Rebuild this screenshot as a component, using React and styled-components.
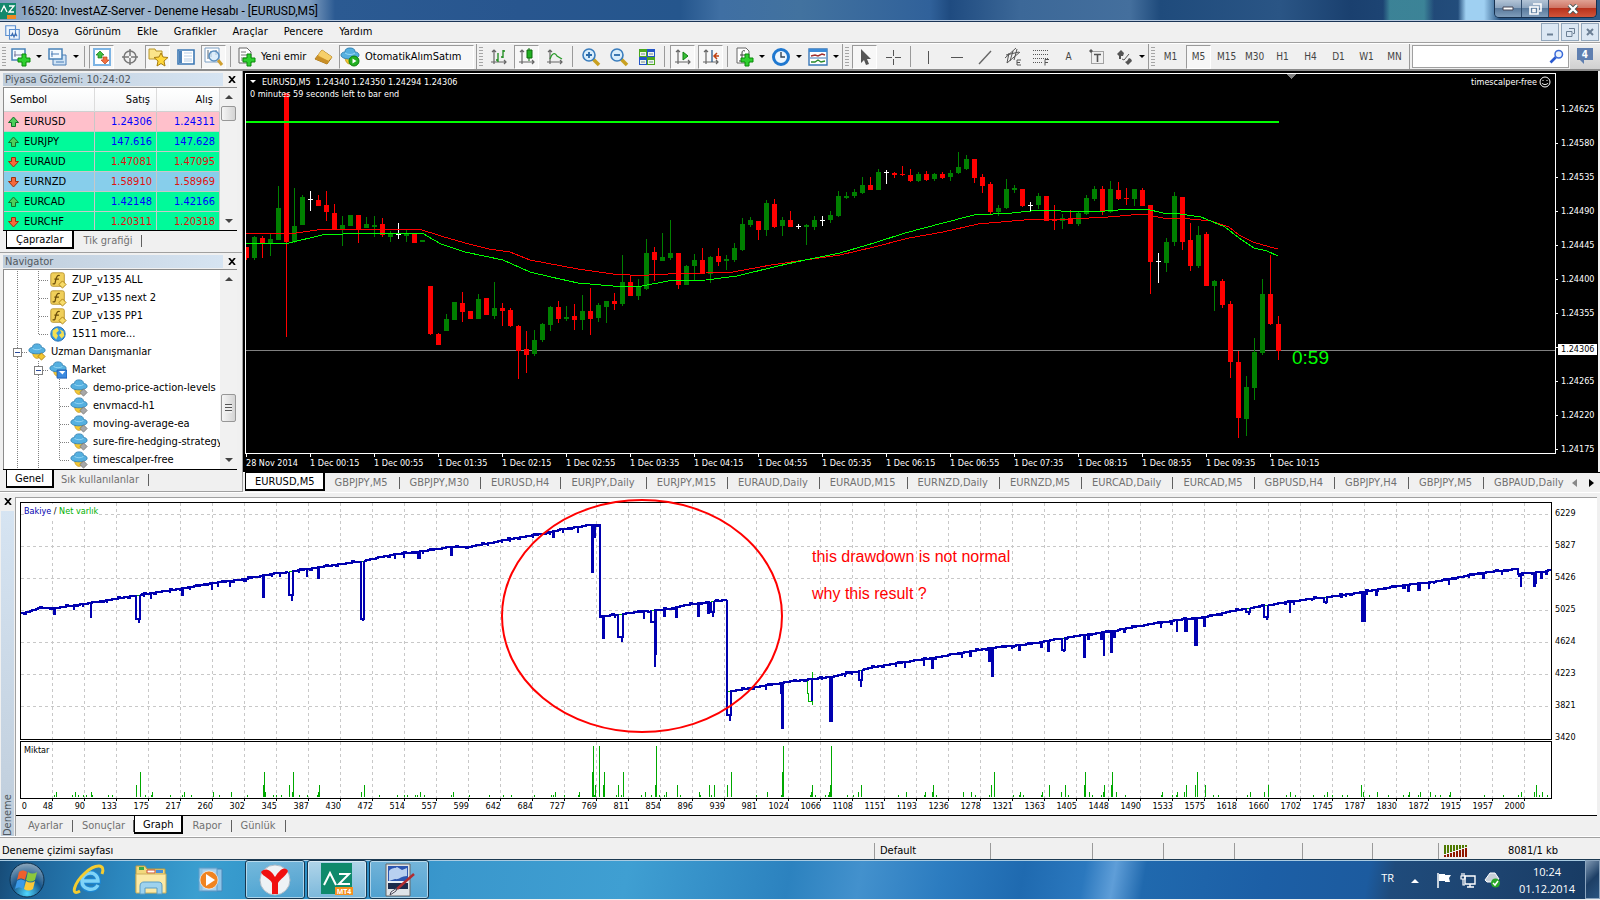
import React from 'react';
import styled, { createGlobalStyle, css } from 'styled-components';

const ui = '"DejaVu Sans Condensed", "DejaVu Sans", sans-serif';
const segoe = '"Open Sans", "Noto Sans", sans-serif';
const arial = '"Liberation Sans", Arial, sans-serif';

const GlobalStyle = createGlobalStyle`
  *, *::before, *::after { box-sizing: border-box; }
  body { margin: 0; background: #f0f0f0; font: 11px/14px ${ui}; color: #000; overflow: hidden; }
  button { font: inherit; color: inherit; background: none; border: 0; padding: 0; }
  svg { display: block; flex: none; }
`;

const Page = styled.div`
  display: flex;
  flex-direction: column;
  min-height: 100vh;
`;

/* window frame */

const TitleBar = styled.header`
  display: flex;
  align-items: flex-start;
  height: 22px;
  border-bottom: 1px solid #1c3556;
  box-shadow: inset 0 -1px 0 #b9cbe0;
  background:
    linear-gradient(90deg, transparent 1383px, #43929fcc 1390px, #43929fcc 1424px, transparent 1434px),
    linear-gradient(90deg, transparent 1458px, #9fd0f2 1466px, #9fd0f2 1484px, transparent 1500px),
    linear-gradient(90deg, #7e9cbd 0, #a3b8cd 60px, #93adc8 240px, #7d9cbf 310px, #2b5a92 335px, #28568f 520px,
      #25568d 680px, #3f6fa3 720px, #42729f 800px, #30619a 930px, #1f4b80 950px, #3c6898 1020px, #446f9d 1130px,
      #1f4b7c 1160px, #2a5585 1280px, #1a406f 1350px, #2e5d8b 100%);
`;

const AppLogo = styled.svg`
  margin: 3px 5px 0 0;
`;

const Title = styled.h1`
  flex: 1;
  margin: 0;
  font: 12px/22px Roboto, ${segoe};
  white-space: nowrap;
`;

const CaptionButtons = styled.div`
  display: flex;
  height: 18px;
  margin-right: 3px;
  border: 1px solid #16304e;
  border-top: 0;
  border-radius: 0 0 5px 5px;
  overflow: hidden;
`;

const CaptionButton = styled.button`
  display: flex;
  align-items: center;
  justify-content: center;
  width: ${(p) => (p.$close ? 47 : 27)}px;
  border-right: ${(p) => (p.$close ? 0 : '1px solid #2f4b6b')};
  background: ${(p) =>
    p.$close
      ? 'linear-gradient(#e0a294 0, #cf7665 45%, #b8321c 50%, #d0553a 100%)'
      : 'linear-gradient(#b3c4d6 0, #8ca4be 45%, #5a7a9c 50%, #7f9dbb 100%)'};
`;

const MenuBar = styled.nav`
  display: flex;
  align-items: center;
  height: 21px;
  padding-left: 5px;
  border-bottom: 1px solid #a0a0a0;
`;

const MenuItem = styled.button`
  height: 20px;
  padding: 0 8px;
`;

const MdiButtons = styled.div`
  display: flex;
  gap: 2px;
  margin-left: auto;
  padding-right: 1px;
`;

const MdiButton = styled.button`
  display: flex;
  align-items: center;
  justify-content: center;
  width: 18px;
  height: 18px;
  border: 1px solid #93a7bb;
  background: #dbe7f3;
`;

/* toolbar */

const Toolbar = styled.div`
  display: flex;
  height: 28px;
  border-top: 1px solid #fff;
  border-bottom: 2px solid #8c8c8c;
`;

const ToolGroup = styled.div`
  display: flex;
  align-items: center;
  gap: 3px;
  padding: 0 2px;
  border-right: 1px solid #9a9a9a;
`;

const Grip = styled.span`
  width: 4px;
  height: 20px;
  background: repeating-linear-gradient(#a5a5a5 0 1px, #f0f0f0 1px 3px);
`;

const Separator = styled.span`
  width: 1px;
  height: 21px;
  margin: 0 ${(p) => (p.$wide ? 2 : 1)}px;
  background: #9a9a9a;
`;

const ToolButton = styled.button`
  display: flex;
  align-items: center;
  justify-content: ${(p) => (p.$start ? 'flex-start' : 'center')};
  gap: 5px;
  width: ${(p) => p.$w || 25}px;
  height: 24px;
  font-size: ${(p) => (p.$small ? 10 : 11)}px;
  color: ${(p) => (p.$small ? '#444' : '#000')};
  white-space: nowrap;
  border: 1px solid transparent;
  ${(p) =>
    p.$on &&
    css`
      border-color: #9a9a9a #fff #fff #9a9a9a;
      background: #f7f7f7;
    `}
`;

const Caret = styled.span`
  border: 3px solid transparent;
  border-top-color: ${(p) => (p.$light ? '#fff' : '#000')};
  border-bottom: 0;
`;

const SearchBox = styled.label`
  display: flex;
  flex: 1;
  align-items: center;
  margin: 1px 1px 1px 2px;
  padding-right: 4px;
  border: 1px solid #a0a0a0;
  background: #fff;

  input {
    flex: 1;
    min-width: 0;
    border: 0;
    outline: 0;
    font: inherit;
    background: transparent;
  }
`;

const ChatButton = styled.button`
  display: flex;
  align-items: center;
  justify-content: center;
  width: 30px;
  background: linear-gradient(#eee, #d0d0d0);
`;

/* left side */

const Workspace = styled.div`
  display: flex;
  height: 421px;
`;

const Sidebar = styled.aside`
  display: flex;
  flex-direction: column;
  width: 243px;
  flex: none;
`;

const Panel = styled.section`
  display: flex;
  flex-direction: column;
  height: ${(p) => p.$h}px;
  padding: 1px 5px 0 3px;
  border-right: 1px solid #a0a0a0;
  border-bottom: 1px solid #a0a0a0;
`;

const PanelTitle = styled.div`
  display: flex;
  align-items: center;
  height: 14px;
  margin-bottom: 1px;

  h2 {
    flex: 1;
    margin: 0 4px 0 0;
    padding-left: 2px;
    font: 11px/13px ${ui};
    color: #505860;
    background: linear-gradient(90deg, #bfcddb, #d6e4f2);
  }
`;

const Close = styled.button`
  display: flex;
  width: 10px;
  justify-content: center;
`;

const PanelBody = styled.div`
  display: flex;
  flex: 1;
  min-height: 0;
  border-top: 1px solid #8c8c8c;
  border-left: 1px solid #8c8c8c;
  background: #fff;
  overflow: hidden;
`;

const ScrollBar = styled.div`
  display: flex;
  flex-direction: column;
  align-items: center;
  justify-content: space-between;
  width: 17px;
  flex: none;
  padding: 7px 0;
  background: #f1f1f1;
`;

const ScrollArrow = styled.span`
  border: 4px solid transparent;
  ${(p) => (p.$up ? 'border-bottom-color: #444; border-top: 0;' : 'border-top-color: #444; border-bottom: 0;')}
`;

const Thumb = styled.span`
  display: flex;
  align-items: center;
  justify-content: center;
  width: 15px;
  height: ${(p) => p.$h}px;
  margin: ${(p) => p.$m};
  border: 1px solid #979797;
  border-radius: 2px;
  background: linear-gradient(90deg, #f5f5f5, #d4d4d4);

  &::after {
    content: '';
    width: 7px;
    height: ${(p) => (p.$ribs ? 9 : 0)}px;
    background: repeating-linear-gradient(#555 0 1px, #eee 1px 3px);
  }
`;

const Quotes = styled.table`
  flex: 1;
  align-self: flex-start;
  border-collapse: separate;
  border-spacing: 0;
  table-layout: fixed;

  th {
    height: 24px;
    padding: 0 6px;
    font-weight: normal;
    text-align: right;
    background: linear-gradient(#fff, #f4f5f6);
    border-right: 1px solid #dcdcdc;
    border-bottom: 1px solid #d0d0d0;
  }
  th:first-child { width: 91px; text-align: left; }
  th:nth-child(2) { width: 62px; }
  td {
    height: 20px;
    padding: 0 4px 0 0;
    text-align: right;
    border-right: 1px solid #c8c8c8;
    border-bottom: 1px solid #c8c8c8;
  }
`;

const QuoteRow = styled.tr`
  background: ${(p) => p.$bg};
  color: ${(p) => (p.$up ? '#0000ff' : '#e01010')};
`;

const SymbolCell = styled.div`
  display: flex;
  align-items: center;
  gap: 5px;
  padding-left: 4px;
  color: #000;
`;

const Tabs = styled.div`
  display: flex;
  flex: ${(p) => (p.$grow ? '1' : 'none')};
  min-width: 0;
  height: ${(p) => p.$h}px;
  padding-left: ${(p) => p.$pl || 0}px;
  border-top: 1px solid #000;
  overflow: hidden;
`;

const Tab = styled.button`
  display: flex;
  align-items: center;
  height: 18px;
  padding: 1px ${(p) => p.$pr ?? 9}px 0 ${(p) => p.$pl ?? 9}px;
  color: #707070;
  white-space: nowrap;

  &::after {
    content: '';
    width: 1px;
    height: 12px;
    margin-left: ${(p) => p.$pr ?? 9}px;
    margin-right: -${(p) => p.$pr ?? 9}px;
    background: #606060;
  }
  ${(p) =>
    p.$active &&
    css`
      color: #000;
      background: #fff;
      border: solid #000;
      border-width: 0 2px 2px 1px;
      &::after { display: none; }
    `}
`;

const Tree = styled.ul`
  flex: 1;
  min-width: 0;
  margin: 0;
  padding: 1px 0 0 3px;
  list-style: none;
  overflow: hidden;
`;

const TreeItem = styled.li`
  display: flex;
  align-items: center;
  height: 18px;
  white-space: nowrap;

  span { padding-left: 5px; }
`;

/* price chart */

const ChartColumn = styled.main`
  display: flex;
  flex-direction: column;
  flex: 1;
  min-width: 0;
`;

const ChartWindow = styled.div`
  display: grid;
  grid-template-columns: minmax(0, 1fr) 42px;
  grid-template-rows: 381px 17px;
  height: 401px;
  padding: 2px 0 0 2px;
  background: #000;
  color: #fff;
  font-size: 9px;
  line-height: 12px;
  border-right: 2px solid #f0f0f0;
`;

const PricePlot = styled.div`
  position: relative;
  border: 1px solid #fff;
  overflow: hidden;
`;

const ChartCaption = styled.div`
  position: absolute;
  top: 1px;
  left: 4px;
  white-space: pre;
`;

const ChartCaptionLine = styled.div`
  display: flex;
  align-items: center;
  gap: 6px;
  height: 13px;
`;

const ExpertName = styled.div`
  position: absolute;
  top: 2px;
  right: 4px;
  display: flex;
  align-items: center;
  gap: 2px;
`;

const PriceAxis = styled.div`
  padding-top: 19px;
`;

const PriceLabel = styled.div`
  display: flex;
  align-items: center;
  height: 34px;
  gap: 3px;
  &::before { content: ''; width: 2px; height: 1px; background: #fff; }
  b {
    margin: 4px 0 0 -3px;
    padding: 0 3px;
    font-weight: normal;
    line-height: 11px;
    background: #fff;
    color: #000;
  }
`;

const TimeAxis = styled.div`
  display: flex;
  padding-left: 1px;
`;

const TimeLabel = styled.div`
  flex: 0 0 64px;
  white-space: nowrap;
  &::before { content: ''; display: block; width: 1px; height: 3px; background: #fff; }
`;

const ChartTabs = styled.div`
  display: flex;
  height: 20px;
  padding-left: 2px;
  box-shadow: inset 0 1px 0 #fff;
`;

const TabScroll = styled.div`
  display: flex;
  align-items: center;
  gap: 12px;
  width: 34px;
  flex: none;
  padding-left: 6px;
  border-top: 1px solid #000;
`;

/* strategy tester */

const Tester = styled.section`
  display: flex;
  height: 345px;
  border-top: 1px solid #fff;
  border-bottom: 1px solid #fff;
`;

const TesterSide = styled.div`
  display: flex;
  flex-direction: column;
  align-items: center;
  width: 15px;
  flex: none;
  padding: 5px 1px 0;
`;

const TesterTitle = styled.div`
  flex: 1;
  width: 13px;
  margin-top: 6px;
  padding-bottom: 3px;
  line-height: 13px;
  color: #505860;
  background: linear-gradient(#bfcddb, #d6e4f2);
  writing-mode: vertical-rl;
  transform: rotate(180deg);
`;

const TesterBody = styled.div`
  display: flex;
  flex-direction: column;
  flex: 1;
  min-width: 0;
  margin: 4px 3px 0 0;
  border-top: 1px solid #a0a0a0;
  border-left: 1px solid #a0a0a0;
`;

const TesterCharts = styled.div`
  display: grid;
  grid-template-columns: minmax(0, 1fr) 45px;
  grid-template-rows: 238px 58px 16px;
  row-gap: 1px;
  height: 317px;
  padding: 4px 0 0 4px;
  background: #fff;
  font-size: 9px;
`;

const Plot = styled.div`
  position: relative;
  border: 1px solid #000;
  svg { overflow: visible; }
`;

const PlotLabel = styled.div`
  position: absolute;
  top: 1px;
  left: 3px;
  background: #fff;
`;

const SeriesName = styled.span`
  color: ${(p) => p.$color};
`;

const Note = styled.p`
  position: absolute;
  left: 791px;
  top: ${(p) => p.$top}px;
  margin: 0;
  font: 16px/20px ${arial};
  color: #ff0000;
`;

const BalanceAxis = styled.div`
  padding-left: 3px;
  line-height: 22px;
  div { height: 32px; }
`;

const TradeAxis = styled.div`
  display: flex;
  padding-left: 1px;
  line-height: 12px;
  overflow: hidden;
`;

const TradeLabel = styled.div`
  flex: 0 0 ${(p) => p.$w}px;
  text-align: right;
`;

/* status bar and taskbar */

const StatusBar = styled.footer`
  display: flex;
  align-items: center;
  height: 22px;
  padding-top: 4px;
  border-top: 1px solid #a0a0a0;
`;

const StatusCell = styled.div`
  display: flex;
  align-items: center;
  height: 16px;
  width: ${(p) => p.$w}px;
  ${(p) => (p.$grow ? 'flex: 1; padding-left: 2px;' : 'flex: none; padding-left: 5px; border-left: 1px solid #9a9a9a;')}
`;

const Traffic = styled.span`
  margin-left: 40px;
`;

const Taskbar = styled.div`
  display: flex;
  height: 40px;
  border-top: 1px solid #1c3a52;
  box-shadow: inset 0 1px 0 #a9cbe2;
  color: #fff;
  font: 11px/17px ${segoe};
  background: linear-gradient(100deg, #174c78 0, #1f679c 40px, #2b86bd 120px, #3b9fd0 200px, #2b8cc4 330px, #3a97cc 440px,
    #3f9fd2 620px, #2c82bf 780px, #4391cd 850px, #2c7cc0 930px, #1f6ab0 1010px, #2b78be 1070px, #5f9ed8 1100px,
    #2069ae 1130px, #1c5fa6 1250px, #1c5b9f 1350px, #1f4b7b 1375px, #1d436f 1480px, #173a62 100%);
`;

const TaskLaunch = styled.button`
  display: flex;
  align-items: center;
  justify-content: center;
  width: ${(p) => p.$w}px;
`;

const TaskButton = styled.button`
  display: flex;
  align-items: center;
  justify-content: center;
  width: 60px;
  margin-left: 2px;
  border: 1px solid #16364f;
  border-radius: 3px;
  box-shadow: inset 0 0 0 1px #ffffff80;
  background: ${(p) => (p.$active ? 'linear-gradient(#ffffffa0, #ffffff60)' : 'linear-gradient(#ffffff50, #ffffff25)')};
`;

const Tray = styled.div`
  display: flex;
  align-items: center;
  gap: 8px;
  margin-left: auto;
`;

const Language = styled.span`
  margin-right: 2px;
  padding-bottom: 4px;
`;

const Clock = styled.div`
  width: 76px;
  margin-right: -8px;
  text-align: center;
`;

const ShowDesktop = styled.button`
  align-self: stretch;
  width: 15px;
  border: 1px solid #8ba5bf;
  background: linear-gradient(135deg, #7f98b3, #1d3f66 50%, #2a5480);
`;

/* icons */

const Svg = ({ s = 20, children, ...rest }) => (
  <svg width={s} height={s} viewBox="0 0 20 20" fill="none" {...rest}>
    {children}
  </svg>
);

const Plus = ({ x = 7, y = 7 }) => (
  <path transform={`translate(${x} ${y})`} d="M4 0h4v4h4v4H8v4H4V8H0V4h4z" fill="#2fd02f" stroke="#0a8a0a" />
);

const Axes = () => (
  <path d="M5 3v14M2 15h15M3 5l2-2 2 2M15 13l2 2-2 2" stroke="#666" strokeWidth="1.2" />
);

const Hat = () => (
  <>
    <path d="M5 9h10c0 5-2 8-5 8s-5-3-5-8z" fill="#f4c832" stroke="#c99a20" />
    <path d="M1 8c0-2 2-3 4-3 0-3 2-4 5-4s5 1 5 4c2 0 4 1 4 3 0 3-5 4-9 4S1 11 1 8z" fill="#55b0e0" stroke="#3585b5" />
    <path d="M5 6c2 2 8 2 10 0" stroke="#9ad8f5" />
  </>
);

const icons = {
  newChart: (
    <Svg>
      <path d="M1 2h13v11H1z" fill="#f4faff" stroke="#4a82b8" strokeWidth="1.500" />
      <path d="M4 4v6M3 8h8" stroke="#779" />
      <Plus />
    </Svg>
  ),
  profiles: (
    <Svg>
      <path d="M5 8h13v10H5z" fill="#cfe3f5" stroke="#4a7db5" />
      <path d="M1 2h13v10H1z" fill="#f4faff" stroke="#4a82b8" strokeWidth="1.500" />
      <path d="M4 4v6M3 7h8M8 15h8" stroke="#4a7db5" />
    </Svg>
  ),
  market: (
    <Svg>
      <path d="M2 2h16v16H2z" fill="#fff" stroke="#7db4e4" strokeWidth="2" />
      <path d="M8 4l4 4H10v3H6V8H4z" fill="#3fc03f" stroke="#177a17" strokeWidth=".7" />
      <path d="M13 17l-4-4h2v-3h4v3h2z" fill="#f07040" stroke="#c04418" strokeWidth=".7" />
    </Svg>
  ),
  crosshair: (
    <Svg stroke="#777" strokeWidth="1.500">
      <circle cx="10" cy="10" r="6" />
      <path d="M10 2v7M10 11v7M2 10h7M11 10h7" />
    </Svg>
  ),
  navigator: (
    <Svg>
      <path d="M1 2h6l1 2h6v8H1z" fill="#fbe58a" stroke="#b8962a" />
      <path d="M13 6l2 4 5 .5-4 3.500 1 5-4-2.500-4 2.500 1-5-4-3.500 5-.5z" fill="#ffd83c" stroke="#a87d10" />
    </Svg>
  ),
  terminal: (
    <Svg>
      <path d="M2 3h16v14H2z" fill="#fff" stroke="#3c78b4" strokeWidth="1.600" />
      <path d="M3 4h3v12H3z" fill="#4a80b8" />
      <path d="M8 6h8M8 9h8M8 12h8M8 14h8" stroke="#b9cfe6" />
    </Svg>
  ),
  tester: (
    <Svg>
      <path d="M1 1h14v14H1z" fill="#fff" stroke="#7da0c4" />
      <path d="M4 3v9M7 4v6M12 3v5" stroke="#567" />
      <path d="M14 13l4 5" stroke="#d0a030" strokeWidth="3" />
      <circle cx="10" cy="9" r="5" fill="#cfe6f8bb" stroke="#5b8fc0" strokeWidth="1.500" />
    </Svg>
  ),
  order: (
    <Svg>
      <path d="M3 1h8l4 4v11H3z" fill="#fff" stroke="#666" />
      <path d="M5 5h5M5 8h8M5 11h6M5 13h5" stroke="#777" />
      <Plus />
    </Svg>
  ),
  gold: (
    <Svg>
      <path d="M8 3l10 7-5 7-12-5z" fill="#e8b23a" stroke="#a8761a" />
      <path d="M8 3l10 7-4 4L4 8z" fill="#f6cf6a" />
      <path d="M1 12l12 5 2-3-11-5z" fill="#c98f28" />
    </Svg>
  ),
  auto: (
    <Svg>
      <Hat />
      <circle cx="14" cy="14" r="5" fill="#22b022" stroke="#0c800c" />
      <path d="M12.500 11.500v5l4-2.500z" fill="#fff" />
    </Svg>
  ),
  bars: (
    <Svg>
      <Axes />
      <path d="M9 6v9M7 13h2M14 3v8M14 4h2M12 10h2" stroke="#1a8a1a" strokeWidth="1.300" />
    </Svg>
  ),
  candles: (
    <Svg>
      <Axes />
      <path d="M12 1v13" stroke="#0a6a0a" />
      <path d="M10 3h5v8h-5z" fill="#22b022" stroke="#0a6a0a" />
    </Svg>
  ),
  line: (
    <Svg>
      <Axes />
      <path d="M5 12c2-6 5-7 7-3l5 3" stroke="#2a9a2a" strokeWidth="1.300" />
    </Svg>
  ),
  zoomIn: (
    <Svg>
      <path d="M12 12l6 6" stroke="#c9a020" strokeWidth="3.500" />
      <circle cx="8" cy="8" r="6" fill="#d8edfb" stroke="#3a7dbd" strokeWidth="1.600" />
      <path d="M5 8h6M8 5v6" stroke="#2a6aaa" strokeWidth="1.800" />
    </Svg>
  ),
  zoomOut: (
    <Svg>
      <path d="M12 12l6 6" stroke="#c9a020" strokeWidth="3.500" />
      <circle cx="8" cy="8" r="6" fill="#d8edfb" stroke="#3a7dbd" strokeWidth="1.600" />
      <path d="M5 8h6" stroke="#2a6aaa" strokeWidth="1.800" />
    </Svg>
  ),
  tiles: (
    <Svg>
      <path d="M2 2h8v8H2zM10 10h8v8h-8z" fill="#4aa81e" />
      <path d="M10 2h8v8h-8zM2 10h8v8H2z" fill="#2456c8" />
      <path d="M3 5h6v4H3zM11 5h6v4h-6zM3 13h6v4H3zM11 13h6v4h-6z" fill="#eef6ea" />
      <path d="M4 7h4M12 7h4M4 15h4M12 15h4" stroke="#789" />
    </Svg>
  ),
  scroll: (
    <Svg>
      <Axes />
      <path d="M10 5v8l5-4z" fill="#35c035" stroke="#128012" />
    </Svg>
  ),
  shift: (
    <Svg>
      <Axes />
      <path d="M11 3v12" stroke="#2a5a8a" strokeWidth="1.300" />
      <path d="M18 9h-5M16 6l-3 3 3 3" stroke="#c04010" strokeWidth="1.500" />
    </Svg>
  ),
  indicators: (
    <Svg>
      <path d="M3 1h9l3 3v12H3z" fill="#fff" stroke="#666" />
      <path d="M11 4c-2-1-3 0-3 2v6c0 2-1 2-3 2M6 8h5" stroke="#444" />
      <Plus />
    </Svg>
  ),
  clock: (
    <Svg>
      <circle cx="10" cy="10" r="7.500" fill="#eef6fd" stroke="#1f78d0" strokeWidth="3" />
      <path d="M10 5v5h4" stroke="#345" strokeWidth="1.400" />
    </Svg>
  ),
  template: (
    <Svg>
      <path d="M1 2h18v16H1z" fill="#fff" stroke="#3a78b8" strokeWidth="1.400" />
      <path d="M1 2h18v3H1z" fill="#3a8ad8" />
      <path d="M3 9l4-1 3 1 4-2 3 1" stroke="#a03030" strokeWidth="1.400" />
      <path d="M2 11h16" stroke="#3a78b8" />
      <path d="M3 15l4 0 3-2 3 2 4-1" stroke="#2a8a2a" strokeWidth="1.400" />
    </Svg>
  ),
  cursor: (
    <Svg>
      <path d="M6 2v14l3-3 2 5 3-1-2-5h4z" fill="#555" />
    </Svg>
  ),
  cross: (
    <Svg stroke="#555">
      <path d="M10.500 3v6M10.500 12v6M3 10.500h6M12 10.500h6" />
    </Svg>
  ),
  vline: <Svg stroke="#555"><path d="M9.500 4v13" /></Svg>,
  hline: <Svg stroke="#555"><path d="M4 10.500h12" /></Svg>,
  trend: <Svg stroke="#666"><path d="M4 17L16 4" strokeWidth="1.400" /></Svg>,
  channel: (
    <Svg stroke="#555">
      <path d="M2 11L13 1M4 16L17 5M6 6l-2 10M10 4L7 14M14 2l-3 11M3 8l13-3" />
      <path d="M18 13h-4v5h4M14 15.500h3" />
    </Svg>
  ),
  fibo: (
    <Svg stroke="#555">
      <path d="M2 3.500h15M2 7.500h15M2 11.500h15M2 15.500h10" strokeDasharray="1 1" />
      <path d="M18 12.500h-4v6M14 15.500h3" />
    </Svg>
  ),
  label: (
    <Svg stroke="#555">
      <path d="M4.500 4.500h12v12h-12z" strokeDasharray="1 1" />
      <path d="M7 7.500h7M10.500 7v8" strokeWidth="1.600" />
      <path d="M3 3h2v2H3z" fill="#555" />
    </Svg>
  ),
  arrows: (
    <Svg>
      <path d="M3 7l4-4 3 3-1 3H7v3H5V9zM18 14l-4 4-3-3 2-1 2-3 2 1z" fill="#555" />
      <path d="M8 12l2 1 5-6" stroke="#555" />
    </Svg>
  ),
};

const CloseGlyph = () => (
  <svg width="8" height="7" viewBox="0 0 8 7"><path d="M1 0l6 7M7 0L1 7" stroke="#000" strokeWidth="1.700" /></svg>
);

const SymbolArrow = ({ up }) => (
  <svg width="11" height="12" viewBox="0 0 11 12">
    {up ? (
      <path d="M5.500 1l5 5.500H7.500v4h-4v-4h-3z" fill="#4ccf5a" stroke="#14702a" />
    ) : (
      <path d="M5.500 11l5-5.500H7.500v-4h-4v4h-3z" fill="#f4683c" stroke="#a03010" />
    )}
  </svg>
);

const treeIcons = {
  fn: (
    <Svg s={18}>
      <rect x="2" y="2" width="15" height="15" rx="2" fill="#f0cf5a" stroke="#b8932c" />
      <path d="M12 5c-3-1-3 1-4 3l-1 4c0 2-1 3-3 2M6 9h5" stroke="#6a4c08" strokeWidth="1.400" />
      <path d="M15 11l4 4-4 4-4-4z" fill="#f8dc6a" stroke="#a87d10" />
    </Svg>
  ),
  globe: (
    <Svg s={18}>
      <circle cx="10" cy="10" r="8" fill="#3a9ae0" stroke="#1c6ab0" />
      <path d="M4 6l5-3 2 3-3 3 2 3-2 4-4-4zM12 5l4 2 1 5-3 3-3-4 3-2z" fill="#f4e050" />
    </Svg>
  ),
  experts: <Svg s={18}><Hat /><path d="M15 11l4 4-4 4-4-4z" fill="#f4c832" stroke="#a87d10" /></Svg>,
  market: <Svg s={18}><Hat /><path d="M9 10h11v9H9z" fill="#3c8ae0" stroke="#1c5ab0" /><path d="M11 11h7l-3 4z" fill="#fff" /></Svg>,
  ea: <Svg s={18}><Hat /><path d="M15 11l4 4-4 4-4-4z" fill="#a8a8a8" stroke="#777" /></Svg>,
};

/* v: line through, t: tee, l: corner, m: collapse box */
const Guide = ({ kind }) => (
  <svg width="21" height="18" viewBox="0 0 21 18" stroke="#808080" shapeRendering="crispEdges">
    <path d={kind === 'l' ? 'M10.500 0v10' : 'M10.500 0v18'} strokeDasharray="1 1" />
    {kind !== 'v' && <path d="M11 9.500h10" strokeDasharray="1 1" />}
    {kind === 'm' && <path d="M6.500 5.500h8v8h-8z" fill="#fff" />}
    {kind === 'm' && <path d="M8 9.500h5" stroke="#2a4a9a" />}
  </svg>
);

/* data */

const quotes = [
  ['EURUSD', '1.24306', '1.24311', 1, '#ffc0cb'],
  ['EURJPY', '147.616', '147.628', 1, '#00fa9a'],
  ['EURAUD', '1.47081', '1.47095', 0, '#00fa9a'],
  ['EURNZD', '1.58910', '1.58969', 0, '#87ceeb'],
  ['EURCAD', '1.42148', '1.42166', 1, '#00fa9a'],
  ['EURCHF', '1.20311', '1.20318', 0, '#00fa9a'],
];

const treeRows = [
  ['vt', 'fn', 'ZUP_v135 ALL'],
  ['vt', 'fn', 'ZUP_v135 next 2'],
  ['vt', 'fn', 'ZUP_v135 PP1'],
  ['vl', 'globe', '1511 more...'],
  ['m', 'experts', 'Uzman Danışmanlar'],
  ['vm', 'market', 'Market'],
  ['vvt', 'ea', 'demo-price-action-levels'],
  ['vvt', 'ea', 'envmacd-h1'],
  ['vvt', 'ea', 'moving-average-ea'],
  ['vvt', 'ea', 'sure-fire-hedging-strategy'],
  ['vvl', 'ea', 'timescalper-free'],
];

const chartTabs = [
  'EURUSD,M5', 'GBPJPY,M5', 'GBPJPY,M30', 'EURUSD,H4', 'EURJPY,Daily', 'EURJPY,M15', 'EURAUD,Daily', 'EURAUD,M15',
  'EURNZD,Daily', 'EURNZD,M5', 'EURCAD,Daily', 'EURCAD,M5', 'GBPUSD,H4', 'GBPJPY,H4', 'GBPJPY,M5', 'GBPAUD,Daily',
];

const times = [
  '28 Nov 2014', '1 Dec 00:15', '1 Dec 00:55', '1 Dec 01:35', '1 Dec 02:15', '1 Dec 02:55', '1 Dec 03:35',
  '1 Dec 04:15', '1 Dec 04:55', '1 Dec 05:35', '1 Dec 06:15', '1 Dec 06:55', '1 Dec 07:35', '1 Dec 08:15',
  '1 Dec 08:55', '1 Dec 09:35', '1 Dec 10:15',
];

const prices = [
  '1.24625', '1.24580', '1.24535', '1.24490', '1.24445', '1.24400', '1.24355', '1.24306', '1.24265', '1.24220', '1.24175',
];

// direction, high, body top, body bottom, low
const candles = `r 247 247 258 260|g 236 237 258 260|r 236 238 244 258|g 234 239 244 256|g 186 208 240 240|r 93 93 242 337
g 188 226 242 243|g 195 197 225 225|w 191 199 199 211|r 195 200 206 206|r 191 205 212 221|r 204 213 230 230
g 216 225 230 246|g 215 215 226 226|r 215 215 230 243|g 217 224 228 228|g 216 225 227 237|r 218 224 235 237
g 231 234 237 242|w 223 234 234 239|g 230 234 236 242|r 234 234 243 243|g 240 240 242 242|r 286 286 334 335
r 333 334 345 345|g 314 319 331 331|g 302 302 320 320|r 292 303 312 322|r 311 311 319 319|g 294 299 319 319
r 298 298 315 315|g 282 308 316 319|r 303 308 311 326|r 308 310 326 327|r 325 326 351 379|r 331 349 355 373
g 330 340 354 356|g 323 324 340 342|g 306 307 325 331|r 301 307 319 323|g 306 317 319 321|r 304 316 320 330
g 295 311 320 330|r 288 311 319 335|g 303 305 318 322|g 301 301 307 323|r 293 301 304 310|g 255 282 304 306
r 276 282 296 296|g 279 286 296 300|g 239 253 289 290|r 247 252 260 281|g 233 257 261 261|g 220 253 258 260
r 253 253 285 289|g 265 266 285 285|g 254 260 266 280|r 248 260 274 274|g 256 257 274 283|r 248 256 262 266
g 255 259 261 270|g 243 248 260 262|g 218 224 250 251|g 217 220 225 227|r 221 221 230 240|g 200 203 230 236
r 199 204 227 228|g 217 220 226 236|r 211 220 227 227|w 224 226 226 229|g 224 225 227 245|g 216 220 227 230
w 216 220 220 226|g 211 215 220 223|g 191 196 216 217|g 192 196 198 199|g 189 192 196 198|g 177 185 193 194
r 177 185 190 190|g 169 172 190 190|w 170 172 172 184|r 172 173 175 178|r 166 174 175 176|r 169 175 181 182
g 172 174 181 182|r 171 174 180 181|g 173 174 179 181|r 172 174 178 179|g 170 173 177 181|g 152 167 173 174
g 155 159 169 170|r 159 159 178 183|r 174 177 186 193|r 182 184 212 214|g 205 208 212 216|g 179 189 208 209
g 185 188 190 193|r 189 189 206 207|w 202 205 205 212|g 193 196 205 209|r 196 196 221 221|r 205 219 221 230
g 214 218 221 229|r 210 218 224 224|g 211 213 224 226|g 195 198 214 215|g 186 189 199 201|r 186 189 212 215
g 181 189 212 213|r 182 190 199 200|r 188 198 199 205|g 189 189 199 206|r 188 190 206 206|r 205 205 262 294
w 253 261 261 283|g 238 242 263 272|g 192 196 242 246|r 197 197 242 250|r 223 240 266 271|g 226 235 266 268
r 232 234 286 286|g 280 281 286 311|r 279 281 305 308|r 301 304 362 378|r 351 362 418 438|g 376 387 419 436
g 338 352 388 400|g 279 294 353 355|r 255 294 324 325|r 316 324 351 360`
  .split(/[|\n]/)
  .map((row) => {
    const [dir, ...v] = row.trim().split(' ');
    return [dir, ...v.map(Number)];
  });

const slowMa =
  '246,233 296,233 324,229 419,229 441,236 465,243 489,249 510,252 530,260 578,269 613,274 630,275 649,275 668,274 706,273 733,272 771,265 805,260 840,255 874,247 909,238 943,232 978,224 1012,221 1036,219 1070,219 1108,217 1143,214 1163,218 1180,218 1211,221 1229,227 1239,235 1253,242 1270,247 1278,249';
const fastMa =
  '246,243 289,243 322,235 365,233 422,233 441,244 465,252 503,260 530,272 551,277 578,283 613,286 642,286 668,281 706,280 737,276 778,266 805,260 840,253 874,243 905,233 943,223 974,215 1012,213 1040,210 1081,212 1105,211 1132,209 1146,209 1163,213 1180,214 1201,217 1225,227 1239,238 1254,248 1267,251 1278,256';

const balances = [6229, 5827, 5426, 5025, 4624, 4223, 3821];

const trades = [
  48, 90, 133, 175, 217, 260, 302, 345, 387, 430, 472, 514, 557, 599, 642, 684, 727, 769, 811, 854, 896, 939, 981, 1024,
  1066, 1108, 1151, 1193, 1236, 1278, 1321, 1363, 1405, 1448, 1490, 1533, 1575, 1618, 1660, 1702, 1745, 1787, 1830, 1872,
  1915, 1957, 2000,
];

const balance = [
  [21, 613], [28, 612], [38, 608], [55, 608], [90, 603], [114, 599], [138, 595], [179, 589], [212, 583], [244, 579],
  [265, 575], [293, 571], [327, 566], [362, 561], [396, 554], [424, 551], [448, 547], [468, 547], [499, 541], [540, 534],
  [564, 529], [590, 525], [599, 525], [599, 617], [604, 616], [644, 611], [668, 609], [685, 605], [726, 600], [727, 600],
  [727, 691], [732, 691], [750, 688], [785, 682], [830, 677], [874, 667], [909, 661], [933, 658], [960, 653], [991, 648],
  [1029, 644], [1070, 637], [1112, 631], [1143, 625], [1177, 620], [1205, 617], [1232, 611], [1267, 605], [1301, 600],
  [1335, 596], [1363, 592], [1397, 586], [1439, 581], [1480, 573], [1516, 569], [1518, 574], [1550, 571],
];

// x, bottom, width
const dips = [
  [54, 615, 3], [74, 610], [83, 607], [91, 618], [107, 603], [144, 597], [151, 599], [170, 593], [182, 596, 3],
  [190, 590], [212, 590], [218, 587], [230, 587], [244, 582, 4], [263, 598, 3], [272, 577], [280, 577], [299, 573],
  [307, 577], [318, 579, 3], [395, 559], [404, 558], [418, 559, 4], [423, 554], [451, 556, 3], [468, 549], [488, 546],
  [502, 543], [510, 542], [533, 538], [550, 535], [553, 538, 3], [563, 533], [578, 533], [592, 573, 3], [595, 538],
  [603, 639, 3], [615, 618], [644, 619], [655, 655, 3], [664, 617, 3], [676, 618, 3], [698, 617, 3], [708, 614, 3],
  [754, 690], [766, 690], [781, 694, 3], [782, 729, 3], [812, 701], [830, 722, 4], [822, 680], [845, 677], [852, 675],
  [896, 667], [905, 668], [924, 666], [932, 669, 3], [962, 658], [970, 657, 3], [989, 662, 3], [992, 677, 3],
  [1012, 649], [1019, 651, 3], [1041, 648, 3], [1048, 652, 3], [1067, 640], [1084, 658, 3], [1088, 640, 3],
  [1101, 640, 3], [1104, 656], [1111, 653, 3], [1114, 638, 3], [1124, 633, 3], [1161, 628], [1171, 625, 3],
  [1177, 632], [1185, 632, 4], [1195, 646, 4], [1204, 627, 3], [1212, 617], [1217, 616], [1259, 608], [1285, 605, 3],
  [1290, 613], [1294, 605], [1312, 601], [1341, 598, 3], [1346, 597], [1362, 622, 5], [1367, 595], [1376, 596, 3],
  [1386, 590], [1403, 589, 4], [1408, 592, 3], [1418, 591, 4], [1429, 589], [1434, 584], [1449, 585], [1469, 578],
  [1483, 579, 3], [1502, 575], [1519, 577, 4], [1521, 587], [1523, 576], [1534, 587, 3], [1536, 584], [1541, 579, 3],
  [1546, 575, 3],
];

// left, right, ledge, bottom
const wideDips = [
  [136, 140, 619, 623], [289, 293, 595, 601], [361, 364, 619, 621], [618, 623, 637, 642], [651, 656, 622, 667],
  [711, 714, 612, 617], [727, 731, 715, 721], [859, 862, 680, 687], [1062, 1065, 650, 652], [1246, 1250, 612, 615],
  [1264, 1268, 617, 620], [1324, 1327, 602, 604],
];

const volumes = {
  51: [593, 599, 656, 783, 831],
  25: [140, 264, 293, 592, 604, 623, 731, 782, 994, 1085, 1112, 1197],
  12: [
    136, 263, 289, 319, 364, 595, 603, 618, 655, 677, 709, 714, 727, 812, 830, 861, 933, 991, 1049, 1065, 1084, 1104,
    1111, 1186, 1195, 1205, 1268, 1361, 1536,
  ],
  5: [
    56, 75, 91, 152, 184, 213, 231, 265, 292, 318, 361, 420, 453, 555, 579, 645, 666, 699, 767, 811, 829, 858, 906, 925,
    932, 963, 971, 1020, 1042, 1061, 1089, 1103, 1116, 1162, 1177, 1184, 1250, 1264, 1290, 1327, 1363, 1377, 1409, 1420,
    1430, 1450, 1521, 1534, 1542,
  ],
  2: [
    54, 72, 78, 83, 86, 92, 108, 112, 145, 151, 170, 182, 191, 219, 247, 273, 276, 281, 299, 307, 317, 379, 397, 404,
    407, 415, 417, 424, 451, 469, 489, 503, 511, 534, 551, 553, 564, 578, 594, 616, 621, 641, 651, 659, 664, 680, 700,
    711, 756, 781, 810, 815, 825, 828, 847, 853, 898, 924, 936, 975, 989, 1013, 1019, 1023, 1041, 1068, 1092, 1101,
    1125, 1161, 1172, 1176, 1213, 1218, 1247, 1286, 1295, 1313, 1324, 1332, 1342, 1347, 1369, 1388, 1403, 1408, 1418,
    1435, 1440, 1449, 1484, 1503, 1518, 1539, 1547,
  ],
};

const levelAt = (x) => {
  const i = balance.findIndex((p, n) => n > 0 && p[0] >= x && p[0] !== balance[n - 1][0]);
  if (i < 1) return balance[balance.length - 1][1];
  const [x0, y0] = balance[i - 1];
  const [x1, y1] = balance[i];
  return Math.round(y0 + ((y1 - y0) * (x - x0)) / (x1 - x0));
};

const noise = [0, 0, 0, -1, 0, 0, 0, 1, 0, 0, 0, 0, 0];

const balancePath = () => {
  let d = 'M21 613';
  for (let x = 22; x <= 1551; x += 2) {
    const gap = wideDips.some(([a, b]) => x > a && x <= b);
    d += gap ? `M${x} ${levelAt(x)}` : `H${x}V${levelAt(x) + noise[(x * 3) % 13]}`;
  }
  return d;
};

const PriceSvg = () => (
  <svg width="1309" height="379" viewBox="246 74 1309 379" shapeRendering="crispEdges" aria-label="EURUSD M5">
    <path d="M246 350.500h1310" stroke="#808080" />
    {candles.map(([dir, high, top, bottom, low], i) => {
      const x = 246 + i * 8;
      const color = { r: '#ff0000', g: '#008000', w: '#ffffff' }[dir];
      return (
        <g key={i} fill={color}>
          <rect x={x} y={high} width="1" height={low - high} />
          <rect x={x - 2} y={top} width="5" height={Math.max(bottom - top, 1)} />
        </g>
      );
    })}
    <polyline points={slowMa} fill="none" stroke="#ff0000" />
    <polyline points={fastMa} fill="none" stroke="#00ff00" />
    <path d="M246 122h1033" stroke="#00ff00" strokeWidth="2" />
    <path d="M1287 74h9l-4.500 5z" fill="#808080" />
    <text x="1292" y="364" fill="#00ff00" fontFamily={arial} fontSize="19">0:59</text>
  </svg>
);

const gridX = Array.from({ length: 47 }, (_, i) => 52.5 + i * 32);
const gridY = Array.from({ length: 7 }, (_, i) => 514.5 + i * 32);

const BalanceSvg = () => (
  <svg width="1530" height="236" viewBox="21 503 1530 236" shapeRendering="crispEdges" aria-label="Bakiye">
    <g stroke="#c8c8c8" strokeDasharray="3 3">
      {gridX.map((x) => <path key={x} d={`M${x} 503v236`} />)}
      {gridY.map((y) => <path key={y} d={`M21 ${y}h1530`} />)}
    </g>
    <path d="M807.500 679v14h1v8h3v-8h1v12v-33" fill="none" stroke="#00b000" />
    <g stroke="#00b000">
      {wideDips.map(([a, b]) => <path key={a} d={`M${a} ${levelAt(b) + 0.5}H${b}`} />)}
    </g>
    <g fill="none" stroke="#0000b0" strokeWidth="2">
      <path d={balancePath()} />
      <path d="M727 600v115" />
      {wideDips.map(([a, b, ledge, bottom]) => (
        <path key={a} d={`M${a} ${levelAt(a)}V${ledge}H${b - 1}V${bottom}V${ledge}H${b}V${levelAt(b)}`} />
      ))}
    </g>
    <g fill="#0000b0">
      {dips.map(([x, bottom, w = 2]) => (
        <rect key={x} x={x - 1} y={levelAt(x) - 1} width={w} height={bottom - levelAt(x) + 1} />
      ))}
    </g>
    <ellipse cx="642" cy="616" rx="140" ry="116" fill="none" stroke="#ff0000" strokeWidth="2" shapeRendering="auto" />
  </svg>
);

const VolumeSvg = () => (
  <svg width="1530" height="56" viewBox="21 742 1530 56" shapeRendering="crispEdges" aria-label="Miktar">
    <g stroke="#c8c8c8" strokeDasharray="3 3">
      {gridX.map((x) => <path key={x} d={`M${x} 742v56`} />)}
    </g>
    <g fill="#00a800">
      {Object.entries(volumes).map(([h, xs]) =>
        xs.map((x) => <rect key={x} x={x} y={797 - h} width="1" height={h} />)
      )}
    </g>
    <path d={gridX.map((x) => `M${x} 799v2`).join('')} stroke="#000" />
  </svg>
);

const Tool = ({ icon, label, w, on, menu }) => (
  <ToolButton $w={w || (menu ? 34 : 25)} $on={on} aria-label={label}>
    {icons[icon]}
    {menu && <Caret />}
  </ToolButton>
);

const App = () => (
  <>
    <GlobalStyle />
    <Page>
      <TitleBar>
        <AppLogo width="16" height="16" viewBox="0 0 16 16">
          <path d="M0 0h16v16H0z" fill="#12886c" />
          <path d="M1 9l3-6 3 6M9 3h5L9 9h5" stroke="#fff" strokeWidth="1.300" fill="none" />
          <path d="M7 12h9v4H7z" fill="#f08a20" />
        </AppLogo>
        <Title>16520: InvestAZ-Server - Deneme Hesabı - [EURUSD,M5]</Title>
        <CaptionButtons>
          <CaptionButton aria-label="Minimize">
            <svg width="12" height="5"><path d="M1 1h10v3H1z" fill="#fff" stroke="#445" /></svg>
          </CaptionButton>
          <CaptionButton aria-label="Restore">
            <svg width="13" height="12">
              <path d="M4 1h8v7h-2M1 4h8v7H1zM4 6.500h2v2H4z" fill="none" stroke="#fff" strokeWidth="1.600" />
            </svg>
          </CaptionButton>
          <CaptionButton $close aria-label="Close">
            <svg width="12" height="10">
              <path d="M2 1l8 8M10 1L2 9" stroke="#455" strokeWidth="4" />
              <path d="M2 1l8 8M10 1L2 9" stroke="#fff" strokeWidth="2.400" />
            </svg>
          </CaptionButton>
        </CaptionButtons>
      </TitleBar>

      <MenuBar>
        <Svg s={15}>
          <path d="M1 1h13v13H1zM6 6h13v13H6z" fill="#eef5fc" stroke="#5b8fd0" strokeWidth="1.500" />
          <path d="M8 15l2-4 2 5 2-5 2 4" stroke="#3a6ab0" strokeWidth="1.400" />
        </Svg>
        {['Dosya', 'Görünüm', 'Ekle', 'Grafikler', 'Araçlar', 'Pencere', 'Yardım'].map((m) => (
          <MenuItem key={m}>{m}</MenuItem>
        ))}
        <MdiButtons>
          <MdiButton aria-label="Minimize chart">
            <svg width="8" height="8"><path d="M1 6.500h6" stroke="#6b7f94" strokeWidth="2" /></svg>
          </MdiButton>
          <MdiButton aria-label="Restore chart">
            <svg width="9" height="9"><path d="M3 .5h5.500v5H7M.5 3.500H6v5H.5z" fill="none" stroke="#6b7f94" /></svg>
          </MdiButton>
          <MdiButton aria-label="Close chart">
            <svg width="8" height="8"><path d="M1 1l6 6M7 1L1 7" stroke="#6b7f94" strokeWidth="2" /></svg>
          </MdiButton>
        </MdiButtons>
      </MenuBar>

      <Toolbar>
        <ToolGroup>
          <Grip />
          <Tool icon="newChart" label="Yeni grafik" menu />
          <Tool icon="profiles" label="Profiller" menu />
          <Separator />
          <Tool icon="market" label="Piyasa Gözlemi" on />
          <Tool icon="crosshair" label="Veri Penceresi" />
          <Tool icon="navigator" label="Navigator" on />
          <Tool icon="terminal" label="Terminal" />
          <Tool icon="tester" label="Strateji Test" on />
          <Separator />
          <ToolButton $w={73} $start>{icons.order}Yeni emir</ToolButton>
          <Tool icon="gold" label="MetaEditor" />
          <ToolButton $w={135} $start $on>{icons.auto}OtomatikAlımSatım</ToolButton>
        </ToolGroup>
        <ToolGroup>
          <Grip />
          <Tool icon="bars" label="Bar" />
          <Tool icon="candles" label="Mum" on />
          <Tool icon="line" label="Çizgi" />
          <Separator $wide />
          <Tool icon="zoomIn" label="Yakınlaştır" />
          <Tool icon="zoomOut" label="Uzaklaştır" />
          <Tool icon="tiles" label="Döşe" />
          <Separator $wide />
          <Tool icon="scroll" label="Otomatik kaydır" on />
          <Tool icon="shift" label="Grafik kaydır" on />
          <Separator />
          <Tool icon="indicators" label="Göstergeler" menu />
          <Tool icon="clock" label="Periyotlar" menu />
          <Tool icon="template" label="Şablonlar" menu />
        </ToolGroup>
        <ToolGroup>
          <Grip />
          <Tool icon="cursor" label="İmleç" on />
          <Tool icon="cross" label="Artı imleç" />
          <Separator $wide />
          <Tool icon="vline" label="Dikey çizgi" />
          <Tool icon="hline" label="Yatay çizgi" />
          <Tool icon="trend" label="Trend çizgisi" />
          <Tool icon="channel" label="Kanal" />
          <Tool icon="fibo" label="Fibonacci" />
          <ToolButton $small>A</ToolButton>
          <Tool icon="label" label="Metin etiketi" />
          <Tool icon="arrows" label="Oklar" menu />
        </ToolGroup>
        <ToolGroup>
          <Grip />
          {['M1', 'M5', 'M15', 'M30', 'H1', 'H4', 'D1', 'W1', 'MN'].map((p) => (
            <ToolButton key={p} $small $on={p === 'M5'}>{p}</ToolButton>
          ))}
        </ToolGroup>
        <SearchBox>
          <input type="text" aria-label="Ara" />
          <Svg s={15}>
            <path d="M2 18l7-7" stroke="#2a5ad0" strokeWidth="3.500" />
            <circle cx="13" cy="7" r="5" stroke="#3a6ad8" strokeWidth="2" fill="#eaf2fd" />
          </Svg>
        </SearchBox>
        <ChatButton aria-label="4">
          <svg width="18" height="17" viewBox="0 0 18 17">
            <path d="M1 0h16v12H8v4l-4-4H1z" fill="#5f7fb0" />
            <text x="9" y="10" fill="#fff" fontSize="10" fontWeight="bold" textAnchor="middle">4</text>
          </svg>
        </ChatButton>
      </Toolbar>

      <Workspace>
        <Sidebar>
          <Panel $h={182}>
            <PanelTitle>
              <h2>Piyasa Gözlemi: 10:24:02</h2>
              <Close aria-label="Kapat"><CloseGlyph /></Close>
            </PanelTitle>
            <PanelBody>
              <Quotes>
                <thead>
                  <tr><th>Sembol</th><th>Satış</th><th>Alış</th></tr>
                </thead>
                <tbody>
                  {quotes.map(([name, bid, ask, up, bg]) => (
                    <QuoteRow key={name} $bg={bg} $up={up}>
                      <td><SymbolCell><SymbolArrow up={up} />{name}</SymbolCell></td>
                      <td>{bid}</td>
                      <td>{ask}</td>
                    </QuoteRow>
                  ))}
                </tbody>
              </Quotes>
              <ScrollBar>
                <ScrollArrow $up />
                <Thumb $h={15} $m="7px 0 auto" />
                <ScrollArrow />
              </ScrollBar>
            </PanelBody>
            <Tabs $h={22} $pl={3}>
              <Tab $active>Çaprazlar</Tab>
              <Tab>Tik grafiği</Tab>
            </Tabs>
          </Panel>
          <Panel $h={239}>
            <PanelTitle>
              <h2>Navigator</h2>
              <Close aria-label="Kapat"><CloseGlyph /></Close>
            </PanelTitle>
            <PanelBody>
              <Tree>
                {treeRows.map(([guides, icon, text]) => (
                  <TreeItem key={text}>
                    {guides.split('').map((g, i) => <Guide key={i} kind={g} />)}
                    {treeIcons[icon]}
                    <span>{text}</span>
                  </TreeItem>
                ))}
              </Tree>
              <ScrollBar>
                <ScrollArrow $up />
                <Thumb $h={28} $m="auto 0 36px" $ribs />
                <ScrollArrow />
              </ScrollBar>
            </PanelBody>
            <Tabs $h={22} $pl={3}>
              <Tab $active $pl={8} $pr={8}>Genel</Tab>
              <Tab $pl={7}>Sık kullanılanlar</Tab>
            </Tabs>
          </Panel>
        </Sidebar>

        <ChartColumn>
          <ChartWindow>
            <PricePlot>
              <PriceSvg />
              <ChartCaption>
                <ChartCaptionLine>
                  <Caret $light />
                  {'EURUSD,M5  1.24340 1.24350 1.24294 1.24306'}
                </ChartCaptionLine>
                <div>0 minutes 59 seconds left to bar end</div>
              </ChartCaption>
              <ExpertName>
                timescalper-free
                <svg width="12" height="12" viewBox="0 0 12 12" fill="none" stroke="#fff">
                  <circle cx="6" cy="6" r="5" />
                  <path d="M4 4v1M8 4v1M3 7c1 2 5 2 6 0" />
                </svg>
              </ExpertName>
            </PricePlot>
            <PriceAxis>
              {prices.map((p) => (
                <PriceLabel key={p}>{p === '1.24306' ? <b>{p}</b> : p}</PriceLabel>
              ))}
            </PriceAxis>
            <TimeAxis>
              {times.map((t) => <TimeLabel key={t}>{t}</TimeLabel>)}
            </TimeAxis>
          </ChartWindow>
          <ChartTabs>
            <Tabs $h={20} $grow>
              {chartTabs.map((t, i) => (
                <Tab key={t + i} $active={i === 0} $pl={i ? 10 : 9} $pr={i ? 11 : 8}>{t}</Tab>
              ))}
            </Tabs>
            <TabScroll>
              <svg width="5" height="8"><path d="M5 0v8L0 4z" fill="#888" /></svg>
              <svg width="5" height="8"><path d="M0 0v8l5-4z" fill="#000" /></svg>
            </TabScroll>
          </ChartTabs>
        </ChartColumn>
      </Workspace>

      <Tester>
        <TesterSide>
          <Close aria-label="Kapat"><CloseGlyph /></Close>
          <TesterTitle>Deneme</TesterTitle>
        </TesterSide>
        <TesterBody>
          <TesterCharts>
            <Plot>
              <BalanceSvg />
              <PlotLabel>
                <SeriesName $color="#0000b0">Bakiye</SeriesName> / <SeriesName $color="#00b000">Net varlık</SeriesName>
              </PlotLabel>
              <Note $top={44}>this drawdown is not normal</Note>
              <Note $top={81}>why this result ?</Note>
            </Plot>
            <BalanceAxis>
              {balances.map((b) => <div key={b}>{b}</div>)}
              <span>3420</span>
            </BalanceAxis>
            <Plot>
              <VolumeSvg />
              <PlotLabel>Miktar</PlotLabel>
            </Plot>
            <span />
            <TradeAxis>
              <TradeLabel $w={6}>0</TradeLabel>
              {trades.map((t, i) => <TradeLabel key={t} $w={i ? 32 : 26}>{t}</TradeLabel>)}
            </TradeAxis>
          </TesterCharts>
          <Tabs $h={21} $pl={3}>
            <Tab>Ayarlar</Tab>
            <Tab $pr={8}>Sonuçlar</Tab>
            <Tab $active $pl={8} $pr={8}>Graph</Tab>
            <Tab>Rapor</Tab>
            <Tab>Günlük</Tab>
          </Tabs>
        </TesterBody>
      </Tester>

      <StatusBar>
        <StatusCell $grow>Deneme çizimi sayfası</StatusCell>
        <StatusCell $w={116}>Default</StatusCell>
        <StatusCell $w={102} />
        <StatusCell $w={71} />
        <StatusCell $w={71} />
        <StatusCell $w={68} />
        <StatusCell $w={70} />
        <StatusCell $w={66} />
        <StatusCell $w={162}>
          <svg width="24" height="12" viewBox="0 0 24 12" shapeRendering="crispEdges">
            {[0, 1, 2, 3, 4, 5, 6, 7].map((i) => (
              <g key={i}>
                <rect x={i * 3} y="0" width="2" height={9 - i} fill="#4f7a00" />
                <rect x={i * 3} y={10 - i} width="2" height={2 + i} fill="#901800" />
              </g>
            ))}
          </svg>
          <Traffic>8081/1 kb</Traffic>
        </StatusCell>
      </StatusBar>

      <Taskbar>
        <TaskLaunch $w={54} aria-label="Start">
          <svg width="36" height="36" viewBox="0 0 36 36">
            <defs>
              <radialGradient id="orb" cx="50%" cy="90%" r="90%">
                <stop offset="0" stopColor="#4fd8ff" />
                <stop offset=".5" stopColor="#17558a" />
                <stop offset="1" stopColor="#8fa8bd" />
              </radialGradient>
            </defs>
            <circle cx="18" cy="18" r="17" fill="url(#orb)" stroke="#0d2f4c" />
            <path d="M10 10c3-2 5-2 8 0l-2 8c-3-2-5-2-8 0z" fill="#f0602c" />
            <path d="M19 10c3 2 6 2 9 0l-2 8c-3 2-6 2-9 0z" fill="#8cc83c" />
            <path d="M8 19c3-2 5-2 8 0l-2 8c-3-2-5-2-8 0z" fill="#3c9ae8" />
            <path d="M17 19c3 2 6 2 9 0l-2 8c-3 2-6 2-9 0z" fill="#fcc838" />
          </svg>
        </TaskLaunch>
        <TaskLaunch $w={70} aria-label="Internet Explorer">
          <svg width="34" height="34" viewBox="0 0 34 34" fill="none">
            <path d="M26 22c-4 7-16 5-16-4 0-10 16-11 16 0H11" stroke="#1d86d0" strokeWidth="6" />
            <path d="M26 22c-4 7-16 5-16-4 0-10 16-11 16 0H11" stroke="#7fd4f8" strokeWidth="3.500" />
            <path d="M8 28C-2 34 2 20 13 10S34 1 30 11" stroke="#f4cc30" strokeWidth="3" />
          </svg>
        </TaskLaunch>
        <TaskLaunch $w={54} aria-label="Explorer">
          <svg width="34" height="32" viewBox="0 0 34 32">
            <path d="M2 2h9l2 3h18v23H2z" fill="#f2d87c" stroke="#b89a40" />
            <path d="M5 3h5v3H5z" fill="#3aa848" />
            <path d="M13 6h8v3h-8z" fill="#fff" stroke="#d05030" />
            <path d="M22 6h7v3h-7z" fill="#4a90d8" />
            <path d="M2 10h30v19H2z" fill="#fbe9a6" stroke="#cdb05a" />
            <path d="M6 30v-8c0-3 2-4 4-4h14c3 0 4 1 4 4v8h-5v-6H11v6z" fill="#9ed2ee" stroke="#5a9cc4" />
          </svg>
        </TaskLaunch>
        <TaskLaunch $w={65} aria-label="Media Player">
          <svg width="26" height="26" viewBox="0 0 26 26">
            <path d="M4 2h20v22H4z" fill="#8fc4e8" stroke="#4a88b8" />
            <path d="M1 1h18v23H1z" fill="#b5daf2aa" stroke="#5f9cc8" />
            <circle cx="11" cy="13" r="9" fill="#f08420" stroke="#fff" strokeOpacity=".6" />
            <path d="M8 7v12l9-6z" fill="#fff" />
          </svg>
        </TaskLaunch>
        <TaskButton aria-label="Yandex">
          <svg width="32" height="32" viewBox="0 0 32 32">
            <circle cx="16" cy="16" r="15" fill="#eef2f5" stroke="#b0bcc6" />
            <path d="M2 8c6-6 11 0 14 5 4-6 9-12 13-6-2 5-8 8-10 12v11h-6V19C11 14 4 13 2 8z" fill="#f01010" />
          </svg>
        </TaskButton>
        <TaskButton $active aria-label="InvestAZ MT4">
          <svg width="32" height="33" viewBox="0 0 32 33">
            <path d="M0 0h31v31H0z" fill="#0f8a6c" />
            <path d="M3 22l6-12 6 12M18 11h10L18 21h11" stroke="#fff" strokeWidth="2" fill="none" />
            <path d="M14 24h18v8H14z" fill="#f79020" />
            <text x="23" y="31" fill="#fff" fontSize="7" fontWeight="bold" textAnchor="middle">MT4</text>
          </svg>
        </TaskButton>
        <TaskButton aria-label="Paint">
          <svg width="32" height="34" viewBox="0 0 32 34">
            <path d="M3 1h24v32H3z" fill="#dfe4e8" stroke="#666" />
            <path d="M5 3h20v16H5z" fill="#2c56b0" />
            <path d="M6 8c3-4 6-2 8-4l5 3 5-2v8c-6 0-8 4-12 3l-6 2z" fill="#b8d0f0" />
            <path d="M5 19h20v7H5z" fill="#1c2c4c" />
            <path d="M5 18h20v2H5z" fill="#e8f0f8" />
            <path d="M31 11L14 26" stroke="#b02c30" strokeWidth="2.500" />
            <path d="M14 25l-6 4-1 3 6-4z" fill="#fff" stroke="#445" />
          </svg>
        </TaskButton>
        <Tray>
          <Language>TR</Language>
          <svg width="24" height="20" viewBox="-7 0 24 20"><path d="M0 13l4-4 4 4z" fill="#fff" /></svg>
          <svg width="16" height="16" viewBox="0 0 16 16">
            <path d="M2 1v15" stroke="#fff" strokeWidth="1.500" />
            <path d="M3 2h6v1h6l-2 3 1 4H9V9H3z" fill="#fff" />
          </svg>
          <svg width="16" height="16" viewBox="0 0 16 16" fill="none" stroke="#fff">
            <path d="M5 4h10v8H5zM7 15h7M10 12v3" strokeWidth="1.400" />
            <path d="M2 1v3M4 1v3M1 4h4v3H1zM3 7v6h2" strokeWidth="1.200" />
          </svg>
          <svg width="17" height="17" viewBox="0 0 17 17">
            <path d="M1 9l5-7h5l4 6-5 3H3z" fill="#c8d0d8" stroke="#fff" />
            <circle cx="11.500" cy="12" r="4.500" fill="#28a828" />
            <path d="M9 12l2 2 3-4" stroke="#fff" strokeWidth="1.500" fill="none" />
          </svg>
          <Clock>10:24<br />01.12.2014</Clock>
          <ShowDesktop aria-label="Show desktop" />
        </Tray>
      </Taskbar>
    </Page>
  </>
);

export default App;
